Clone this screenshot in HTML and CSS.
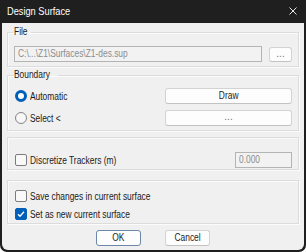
FILE: index.html
```html
<!DOCTYPE html>
<html lang="en">
<head>
	<meta charset="UTF-8">
	<title>Design Surface</title>
	<link rel="stylesheet" href="styles.css">
</head>
<body>
	<div class="dialog">
		<div class="title-bar">
			<span class="t">Design Surface</span>
			<svg class="close" width="8" height="8" viewBox="0 0 8 8"><path d="M0.5 0.5L7.5 7.5M7.5 0.5L0.5 7.5" stroke="#e6e6e6" stroke-width="1"/></svg>
		</div>
		<div class="content">
			<fieldset class="group group-file">
				<legend><span class="t">File</span></legend>
				<div class="row">
					<div class="text-box"><span class="t">C:\...\Z1\Surfaces\Z1-des.sup</span></div>
					<div class="btn btn-small">...</div>
				</div>
			</fieldset>
			<fieldset class="group group-boundary">
				<legend><span class="t">Boundary</span></legend>
				<div class="row">
					<label class="option"><span class="radio checked"></span><span class="t">Automatic</span></label>
					<div class="btn btn-wide"><span class="t">Draw</span></div>
				</div>
				<div class="row">
					<label class="option"><span class="radio"></span><span class="t">Select &lt;</span></label>
					<div class="btn btn-wide btn-dots">...</div>
				</div>
			</fieldset>
			<fieldset class="group group-trackers">
				<div class="row">
					<label class="option"><span class="check"></span><span class="t">Discretize Trackers (m)</span></label>
					<div class="text-box num-box"><span class="t">0.000</span></div>
				</div>
			</fieldset>
			<fieldset class="group group-options">
				<label class="option"><span class="check"></span><span class="t">Save changes in current surface</span></label>
				<label class="option"><span class="check checked"><svg width="8" height="8" viewBox="0 0 8 8"><path d="M1 4.2L3 6.2L7 1.8" fill="none" stroke="#fff" stroke-width="1.3"/></svg></span><span class="t">Set as new current surface</span></label>
			</fieldset>
			<div class="buttons">
				<div class="btn btn-dialog btn-default"><span class="t">OK</span></div>
				<div class="btn btn-dialog"><span class="t">Cancel</span></div>
			</div>
		</div>
	</div>
</body>
</html>
```
FILE: styles.css
```css
* {
	margin: 0;
	padding: 0;
	box-sizing: border-box;
}
body {
	width: 306px;
	height: 252px;
	overflow: hidden;
	background-color: #fff;
	font-family: "Liberation Sans", Arial, sans-serif;
	font-size: 10px;
	color: #1a1a1a;
}
/* the dialog font is narrower than Arial */
.t {
	display: inline-block;
	white-space: nowrap;
	transform: scaleX(0.84);
	transform-origin: left center;
}
.btn .t {
	transform-origin: center;
}
.dialog {
	width: 306px;
	height: 252px;
	background-color: #1f1f1f;
	border-radius: 0 0 7px 7px;
	display: flex;
	flex-direction: column;
}
.title-bar {
	height: 23px;
	display: flex;
	align-items: center;
	justify-content: space-between;
	padding: 0 9px 1px 7px;
	color: #fff;
	font-size: 11px;
}
.content {
	flex: 1;
	margin: 0 2px 2px;
	padding: 3px 5px 0;
	background-color: #f0f0f0;
	border-radius: 0 0 6px 6px;
}
.group {
	border: 1px solid #dcdcdc;
	box-shadow: inset 1px 1px 0 #fbfbfb, 1px 1px 0 #fbfbfb;
	padding: 0 6px 4px 6px;
}
.group legend {
	line-height: 12px;
	padding: 0 1px;
	margin-left: -1px;
}
.row {
	display: flex;
	align-items: center;
	justify-content: space-between;
	gap: 7px;
}
.group-file {
	padding-top: 8px;
}
.group-boundary {
	margin-top: 2px;
	padding-top: 7px;
}
.group-boundary .row + .row {
	margin-top: 6px;
}
.group-trackers {
	margin-top: 6px;
	padding-top: 14px;
	padding-bottom: 1px;
}
.group-options {
	margin-top: 10px;
	padding-top: 9px;
	padding-bottom: 3px;
	display: flex;
	flex-direction: column;
	gap: 6px;
}
.text-box {
	flex: 1;
	height: 16px;
	line-height: 14px;
	padding-left: 3px;
	border: 1px solid #b4b4b4;
	background-color: #f2f2f2;
	color: #8c8c8c;
	white-space: nowrap;
}
.num-box {
	flex: none;
	width: 57px;
}
.btn {
	height: 16px;
	line-height: 14px;
	text-align: center;
	background-color: #fdfdfd;
	border: 1px solid #d3d3d3;
	border-bottom-color: #c2c2c2;
	border-radius: 3px;
	color: #1a1a1a;
}
.btn-small {
	width: 23px;
	height: 15px;
	line-height: 11px;
	color: #777;
}
.btn-wide {
	width: 127px;
	height: 16px;
}
.btn-dots {
	line-height: 12px;
	color: #777;
}
.option {
	display: flex;
	align-items: center;
	gap: 3px;
	height: 12px;
	white-space: nowrap;
}
.radio {
	width: 12px;
	height: 12px;
	border-radius: 50%;
	border: 1px solid #858585;
	background-color: #f7f7f7;
	margin-left: 1px;
}
.radio.checked {
	border: 3px solid #005fb8;
	background-color: #fff;
}
.check {
	width: 12px;
	height: 12px;
	border-radius: 2px;
	border: 1px solid #7c7c7c;
	background-color: #f9f9f9;
	margin-left: 1px;
	display: flex;
	align-items: center;
	justify-content: center;
}
.check.checked {
	border-color: #005fb8;
	background-color: #005fb8;
}
.buttons {
	display: flex;
	justify-content: center;
	gap: 24px;
	margin-top: 6px;
}
.btn-dialog {
	width: 45px;
}
.btn-default {
	border: 1px solid #6c87a8;
}
```
